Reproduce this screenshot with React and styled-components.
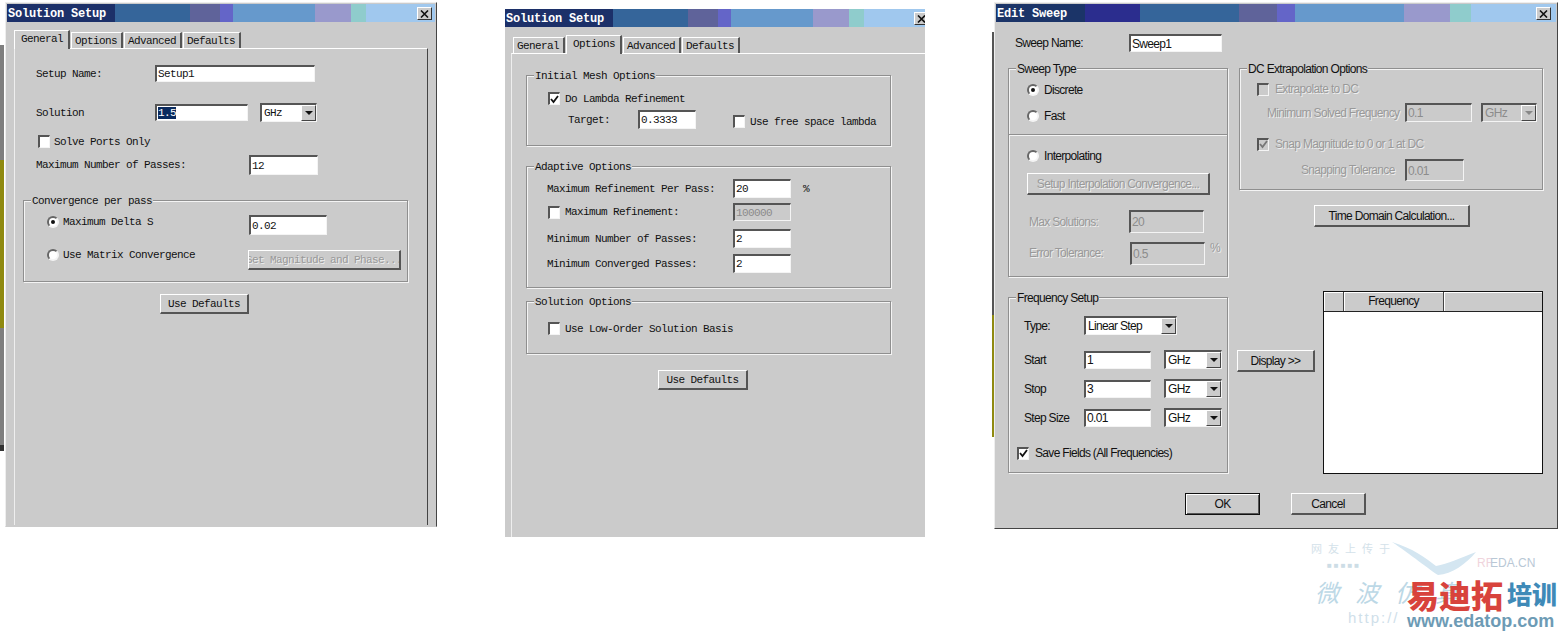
import React from "react";
import styled, { createGlobalStyle, css } from "styled-components";

const GRAY = "#cbcbcb";
const MONO = `"Liberation Mono", "DejaVu Sans Mono", monospace`;
const SANS = `"Liberation Sans", Arial, sans-serif`;

const Global = createGlobalStyle`
  html, body { margin: 0; padding: 0; background: #fff; overflow: hidden; }
  * { box-sizing: border-box; }
`;

const Page = styled.div`
  position: relative;
  display: flex;
  align-items: flex-start;
  width: 1560px;
  height: 632px;
  overflow: hidden;
  background: #fff;
`;

// leftovers of the app window behind the dialogs
const Strip = styled.div`
  display: flex;
  flex-direction: column;
  flex: none;
  width: ${(p) => p.$w}px;
  margin-top: ${(p) => p.$top}px;
  margin-right: ${(p) => p.$after}px;
`;
const StripPart = styled.div`
  height: ${(p) => p.$h}px;
  background: ${(p) => p.$c};
`;

const Dialog = styled.div`
  position: relative;
  flex: none;
  display: flex;
  flex-direction: column;
  width: ${(p) => p.$w}px;
  height: ${(p) => p.$h}px;
  margin-top: ${(p) => p.$top}px;
  margin-right: ${(p) => p.$after || 0}px;
  background: ${GRAY};
  color: #111;
  font-family: ${(p) => (p.$sans ? SANS : MONO)};
  font-size: ${(p) => (p.$sans ? 12 : 11)}px;
  letter-spacing: ${(p) => (p.$sans ? "-0.68px" : "-0.6px")};
  ${(p) =>
    p.$plain
      ? ""
      : css`
          padding: 1px;
          border: 1px solid;
          border-color: #eee #444 ${p.$closed ? "#444" : "transparent"} #eee;
        `}
`;

const TitleBar = styled.div`
  position: relative;
  flex: none;
  display: flex;
  height: 18px;
  overflow: hidden;
`;
const Band = styled.div`
  flex: ${(p) => (p.$w ? `0 0 ${p.$w}px` : "1")};
  background: ${(p) => p.$c};
`;
const TitleText = styled.div`
  position: absolute;
  left: 1px;
  top: 1px;
  line-height: 18px;
  color: #fff;
  font-family: ${MONO};
  font-size: 12px;
  font-weight: 700;
  letter-spacing: -0.2px;
`;
const CloseBtn = styled.div`
  position: absolute;
  top: 3px;
  right: ${(p) => p.$right}px;
  display: flex;
  align-items: center;
  justify-content: center;
  width: 15px;
  height: 13px;
  background: ${GRAY};
  border: 1px solid;
  border-color: #fff #333 #333 #fff;
`;

const Tabs = styled.div`
  flex: none;
  display: flex;
  align-items: flex-end;
  height: 18px;
  margin-top: 8px;
  margin-left: ${(p) => p.$left}px;
`;
const Tab = styled.div`
  position: relative;
  height: ${(p) => (p.$active ? 19 : 16)}px;
  margin-bottom: ${(p) => (p.$active ? -1 : 0)}px;
  margin-right: 1px;
  padding: ${(p) => (p.$active ? "2px 5px 0 6px" : "2px 4px 0 3px")};
  line-height: 13px;
  background: ${GRAY};
  border-top: 1px solid #fff;
  border-left: 1px solid #fff;
  border-right: 2px solid #555;
`;
const TabPanel = styled.div`
  flex: 1;
  margin-left: ${(p) => p.$left}px;
  margin-right: ${(p) => p.$right}px;
  border-top: 1px solid #fff;
  border-left: 1px solid #eee;
  border-right: ${(p) => (p.$right ? "1px solid #444" : "0")};
`;

const Row = styled.div`
  display: flex;
  align-items: center;
  flex: none;
  width: ${(p) => (p.$w ? `${p.$w}px` : "auto")};
  margin-top: ${(p) => p.$top || 0}px;
  margin-left: ${(p) => p.$left || 0}px;
  margin-bottom: ${(p) => p.$bottom || 0}px;
  gap: ${(p) => p.$gap || 0}px;
`;
const Label = styled.span`
  flex: none;
  width: ${(p) => (p.$w ? `${p.$w}px` : "auto")};
  white-space: nowrap;
  ${(p) =>
    p.$off &&
    css`
      color: #999;
      text-shadow: 1px 1px 0 #eee;
    `}
`;

const sunken = css`
  border-style: solid;
  border-width: 2px 1px 1px 2px;
  border-color: #555 #f4f4f4 #f4f4f4 #555;
`;
const Field = styled.div`
  flex: none;
  display: flex;
  align-items: center;
  width: ${(p) => p.$w}px;
  height: ${(p) => p.$h}px;
  padding-left: 1px;
  background: ${(p) => (p.$off ? GRAY : "#fff")};
  color: ${(p) => (p.$off ? "#8c8c8c" : "#111")};
  white-space: nowrap;
  overflow: hidden;
  ${sunken}
`;
const Selected = styled.span`
  background: #0a2a5e;
  color: #fff;
`;
const SelectBox = styled(Field)`
  justify-content: space-between;
  padding: 0 0 0 2px;
  margin-left: ${(p) => p.$gap || 0}px;
`;
const Arrow = styled.div`
  flex: none;
  display: flex;
  align-items: center;
  justify-content: center;
  width: 15px;
  height: 100%;
  background: ${GRAY};
  border: 1px solid;
  border-color: #fff #444 #444 #fff;
`;

const Button = styled.div`
  flex: none;
  display: flex;
  align-items: center;
  justify-content: center;
  width: ${(p) => p.$w}px;
  height: ${(p) => p.$h}px;
  margin-top: ${(p) => p.$top || 0}px;
  margin-left: ${(p) => p.$left || 0}px;
  white-space: nowrap;
  overflow: hidden;
  background: ${GRAY};
  color: ${(p) => (p.$off ? "#999" : "#111")};
  text-shadow: ${(p) => (p.$off ? "1px 1px 0 #eee" : "none")};
  border-style: solid;
  border-width: 1px 2px 2px 1px;
  border-color: #fff #555 #555 #fff;
  ${(p) =>
    p.$default &&
    css`
      border: 1px solid #111;
      box-shadow: inset 1px 1px 0 #fff, inset -1px -1px 0 #555;
    `}
`;

const Box = styled.div`
  flex: none;
  display: flex;
  align-items: center;
  justify-content: center;
  width: 12px;
  height: 13px;
  background: ${(p) => (p.$off ? GRAY : "#fff")};
  ${sunken}
`;
const RadioDot = styled.div`
  flex: none;
  display: flex;
  align-items: center;
  justify-content: center;
  width: 12px;
  height: 12px;
  border-radius: 50%;
  background: #fff;
  border: 2px solid;
  border-color: #666 #f4f4f4 #f4f4f4 #666;
  &::after {
    content: "";
    width: 4px;
    height: 4px;
    border-radius: 50%;
    background: ${(p) => (p.$on ? "#111" : "transparent")};
  }
`;

const Group = styled.div`
  position: relative;
  flex: none;
  width: ${(p) => p.$w}px;
  height: ${(p) => p.$h}px;
  margin-top: ${(p) => p.$top || 0}px;
  margin-left: ${(p) => p.$left || 0}px;
  border: 1px solid #8f8f8f;
  box-shadow: 1px 1px 0 #f4f4f4, inset 1px 1px 0 #f4f4f4;
`;
const Legend = styled.span`
  position: absolute;
  top: -6px;
  left: 7px;
  padding: 0 1px;
  line-height: 13px;
  background: ${GRAY};
  white-space: nowrap;
`;
const Section = styled.div`
  height: ${(p) => p.$h}px;
  padding-top: 1px;
  border-bottom: 1px solid #8f8f8f;
  box-shadow: 0 1px 0 #f4f4f4;
  overflow: hidden;
`;

const Body = styled.div`
  flex: 1;
  padding-left: 12px;
`;
const Columns = styled.div`
  display: grid;
  grid-template-columns: 220px 306px;
  column-gap: 9px;
  row-gap: 14px;
  margin-top: ${(p) => p.$top}px;
`;
const SideRow = styled.div`
  display: flex;
  align-items: flex-start;
`;
const Stack = styled.div`
  display: flex;
  flex-direction: column;
  align-items: flex-start;
`;

const FreqTable = styled.div`
  flex: none;
  display: flex;
  flex-direction: column;
  width: 220px;
  height: 183px;
  margin-left: 8px;
  background: #fff;
  border: 1px solid #111;
`;
const FreqHead = styled.div`
  display: grid;
  grid-template-columns: 20px 100px 1fr;
  height: 20px;
  background: ${GRAY};
  border-bottom: 1px solid #222;
`;
const HeadCell = styled.div`
  display: flex;
  align-items: center;
  justify-content: center;
  padding-bottom: 2px;
  border-right: 1px solid #444;
  box-shadow: inset 1px 1px 0 #fff;
  &:last-child { border-right: 0; }
`;
const Footer = styled.div`
  display: flex;
  gap: 31px;
  margin-top: 19px;
  margin-left: 177px;
`;

// faint site stamp bottom right
const Stamp = styled.div`
  position: absolute;
  left: 1305px;
  top: 538px;
  width: 255px;
  height: 94px;
  overflow: hidden;
`;
const StampText = styled.span`
  position: absolute;
  left: ${(p) => p.$x}px;
  top: ${(p) => p.$y}px;
  line-height: 1;
  white-space: nowrap;
  color: ${(p) => p.$c};
  font-size: ${(p) => p.$s}px;
  font-weight: ${(p) => p.$b || 400};
  font-family: ${(p) => (p.$latin ? SANS : `"Noto Sans CJK SC", sans-serif`)};
  letter-spacing: ${(p) => p.$ls || 0}px;
  ${(p) => (p.$italic ? "font-style: italic;" : "")}
`;
const Bird = styled.svg`
  position: absolute;
  left: 85px;
  top: 4px;
`;

const bandsLeft = [
  [108, "#1c3069"],
  [75, "#35659a"],
  [30, "#5f639a"],
  [13, "#6465c8"],
  [82, "#6699cc"],
  [36, "#9999cc"],
  [15, "#8fcccc"],
];
const bandsSweep = [
  [89, "#1b3468"],
  [55, "#2b2d8e"],
  [99, "#35659a"],
  [38, "#5f639a"],
  [18, "#6465c8"],
  [109, "#6699cc"],
  [46, "#9999cc"],
  [21, "#8fcccc"],
];

function Title({ text, bands, closeRight }) {
  return (
    <TitleBar>
      {bands.map(([w, c]) => (
        <Band key={c} $w={w} $c={c} />
      ))}
      <Band $c="#a0c8ee" />
      <TitleText>{text}</TitleText>
      <CloseBtn $right={closeRight}>
        <svg width="9" height="8" viewBox="0 0 9 8">
          <path d="M1 0.5 L8 7.5 M8 0.5 L1 7.5" stroke="#111" strokeWidth="1.6" fill="none" />
        </svg>
      </CloseBtn>
    </TitleBar>
  );
}

function Check({ on, off }) {
  return (
    <Box $off={off}>
      {on && (
        <svg width="9" height="9" viewBox="0 0 9 9">
          <path d="M1 4 L3.5 7 L8 1" stroke={off ? "#777" : "#111"} strokeWidth="1.8" fill="none" />
        </svg>
      )}
    </Box>
  );
}

function Select({ value, w, h, gap, off }) {
  return (
    <SelectBox $w={w} $h={h} $gap={gap} $off={off}>
      <span>{value}</span>
      <Arrow>
        <svg width="8" height="4" viewBox="0 0 8 4">
          <path d="M0 0 H8 L4 4 Z" fill={off ? "#888" : "#111"} />
        </svg>
      </Arrow>
    </SelectBox>
  );
}

function SetupTabs({ active, left }) {
  return (
    <Tabs $left={left}>
      {["General", "Options", "Advanced", "Defaults"].map((t) => (
        <Tab key={t} $active={t === active}>
          {t}
        </Tab>
      ))}
    </Tabs>
  );
}

function GeneralDialog() {
  return (
    <Dialog $w={432} $h={525} $top={2} $after={68}>
      <Title text="Solution Setup" bands={bandsLeft} closeRight={3} />
      <SetupTabs active="General" left={7} />
      <TabPanel $left={7} $right={7}>
        <Row $top={16} $left={21}>
          <Label $w={119}>Setup Name:</Label>
          <Field $w={160} $h={17}>Setup1</Field>
        </Row>
        <Row $top={21} $left={21}>
          <Label $w={119}>Solution</Label>
          <Field $w={93} $h={17}><Selected>1.5</Selected></Field>
          <Select value="GHz" w={57} h={19} gap={12} />
        </Row>
        <Row $top={13} $left={23} $gap={4}>
          <Check />
          <Label>Solve Ports Only</Label>
        </Row>
        <Row $top={7} $left={21}>
          <Label $w={213}>Maximum Number of Passes:</Label>
          <Field $w={69} $h={20}>12</Field>
        </Row>
        <Group $w={385} $h={82} $top={25} $left={8}>
          <Legend>Convergence per pass</Legend>
          <Row $top={14} $left={23}>
            <Row $w={202} $gap={4} $bottom={6}>
              <RadioDot $on />
              <Label>Maximum Delta S</Label>
            </Row>
            <Field $w={78} $h={20}>0.02</Field>
          </Row>
          <Row $top={14} $left={23}>
            <Row $w={201} $gap={4} $bottom={10}>
              <RadioDot />
              <Label>Use Matrix Convergence</Label>
            </Row>
            <Button $off $w={153} $h={20}>Set Magnitude and Phase...</Button>
          </Row>
        </Group>
        <Button $w={89} $h={20} $top={12} $left={145}>Use Defaults</Button>
      </TabPanel>
    </Dialog>
  );
}

function OptionsDialog() {
  return (
    <Dialog $plain $w={420} $h={528} $top={9} $after={67}>
      <Title text="Solution Setup" bands={bandsLeft} closeRight={-4} />
      <SetupTabs active="Options" left={8} />
      <TabPanel $left={6} $right={0}>
        <Group $w={365} $h={71} $top={21} $left={14}>
          <Legend>Initial Mesh Options</Legend>
          <Row $top={16} $left={21} $gap={5}>
            <Check on />
            <Label>Do Lambda Refinement</Label>
          </Row>
          <Row $top={5} $left={41}>
            <Label $w={70}>Target:</Label>
            <Field $w={58} $h={19}>0.3333</Field>
            <Row $top={4} $left={37} $gap={5}>
              <Check />
              <Label>Use free space lambda</Label>
            </Row>
          </Row>
        </Group>
        <Group $w={365} $h={122} $top={20} $left={14}>
          <Legend>Adaptive Options</Legend>
          <Row $top={12} $left={20}>
            <Label $w={186}>Maximum Refinement Per Pass:</Label>
            <Field $w={58} $h={19}>20</Field>
            <Row $left={12}>%</Row>
          </Row>
          <Row $top={5} $left={21} $gap={5}>
            <Check />
            <Label $w={163}>Maximum Refinement:</Label>
            <Field $off $w={58} $h={18}>100000</Field>
          </Row>
          <Row $top={8} $left={20}>
            <Label $w={186}>Minimum Number of Passes:</Label>
            <Field $w={58} $h={19}>2</Field>
          </Row>
          <Row $top={6} $left={20}>
            <Label $w={186}>Minimum Converged Passes:</Label>
            <Field $w={58} $h={19}>2</Field>
          </Row>
        </Group>
        <Group $w={365} $h={53} $top={13} $left={14}>
          <Legend>Solution Options</Legend>
          <Row $top={20} $left={21} $gap={5}>
            <Check />
            <Label>Use Low-Order Solution Basis</Label>
          </Row>
        </Group>
        <Button $w={90} $h={20} $top={16} $left={146}>Use Defaults</Button>
      </TabPanel>
    </Dialog>
  );
}

function SweepDialog() {
  return (
    <Dialog $sans $closed $w={564} $h={527} $top={2}>
      <Title text="Edit Sweep" bands={bandsSweep} closeRight={5} />
      <Body>
        <Row $top={12} $left={7}>
          <Label $w={114}>Sweep Name:</Label>
          <Field $w={93} $h={18}>Sweep1</Field>
        </Row>
        <Columns $top={16}>
          <Group $w={220} $h={209}>
            <Legend>Sweep Type</Legend>
            <Section $h={66}>
              <Row $top={13} $left={18} $gap={5}>
                <RadioDot $on />
                <Label>Discrete</Label>
              </Row>
              <Row $top={12} $left={18} $gap={5}>
                <RadioDot />
                <Label>Fast</Label>
              </Row>
            </Section>
            <Row $top={14} $left={18} $gap={5}>
              <RadioDot />
              <Label>Interpolating</Label>
            </Row>
            <Button $off $w={183} $h={22} $top={10} $left={18}>Setup Interpolation Convergence...</Button>
            <Row $top={15} $left={20}>
              <Label $off $w={100}>Max Solutions:</Label>
              <Field $off $w={75} $h={23}>20</Field>
            </Row>
            <Row $top={8} $left={20}>
              <Label $off $w={101}>Error Tolerance:</Label>
              <Field $off $w={75} $h={23}>0.5</Field>
              <Row $left={5} $bottom={10}><Label $off>%</Label></Row>
            </Row>
          </Group>
          <Stack>
            <Group $w={304} $h={122} $left={2}>
              <Legend>DC Extrapolation Options</Legend>
              <Row $top={13} $left={17} $gap={6}>
                <Check off />
                <Label $off>Extrapolate to DC</Label>
              </Row>
              <Row $top={7} $left={27}>
                <Label $off $w={138}>Minimum Solved Frequency</Label>
                <Field $off $w={67} $h={19}>0.1</Field>
                <Select off value="GHz" w={56} h={19} gap={9} />
              </Row>
              <Row $top={15} $left={17} $gap={6}>
                <Check on off />
                <Label $off>Snap Magnitude to 0 or 1 at DC</Label>
              </Row>
              <Row $top={8} $left={61}>
                <Label $off $w={104}>Snapping Tolerance</Label>
                <Field $off $w={59} $h={22}>0.01</Field>
              </Row>
            </Group>
            <Button $w={156} $h={22} $top={15} $left={77}>Time Domain Calculation...</Button>
          </Stack>
          <Group $w={220} $h={176} $top={6}>
            <Legend>Frequency Setup</Legend>
            <Row $top={18} $left={15}>
              <Label $w={60}>Type:</Label>
              <Select value="Linear Step" w={93} h={19} />
            </Row>
            <Row $top={15} $left={15}>
              <Label $w={60}>Start</Label>
              <Field $w={67} $h={18}>1</Field>
              <Select value="GHz" w={58} h={19} gap={13} />
            </Row>
            <Row $top={10} $left={15}>
              <Label $w={60}>Stop</Label>
              <Field $w={67} $h={18}>3</Field>
              <Select value="GHz" w={58} h={19} gap={13} />
            </Row>
            <Row $top={10} $left={15}>
              <Label $w={60}>Step Size</Label>
              <Field $w={67} $h={18}>0.01</Field>
              <Select value="GHz" w={58} h={19} gap={13} />
            </Row>
            <Row $top={19} $left={8} $gap={6}>
              <Check on />
              <Label>Save Fields (All Frequencies)</Label>
            </Row>
          </Group>
          <SideRow>
            <Button $w={78} $h={22} $top={59}>Display &gt;&gt;</Button>
            <FreqTable>
              <FreqHead>
                <HeadCell />
                <HeadCell>Frequency</HeadCell>
                <HeadCell />
              </FreqHead>
            </FreqTable>
          </SideRow>
        </Columns>
        <Footer>
          <Button $default $w={75} $h={22}>OK</Button>
          <Button $w={75} $h={22}>Cancel</Button>
        </Footer>
      </Body>
    </Dialog>
  );
}

export default function App() {
  return (
    <Page>
      <Global />
      <Strip $w={4} $top={45} $after={1}>
        <StripPart $h={115} $c="#7f7f7f" />
        <StripPart $h={168} $c="#8f8a10" />
        <StripPart $h={117} $c="#7f7f7f" />
        <StripPart $h={6} $c="#333" />
      </Strip>
      <GeneralDialog />
      <OptionsDialog />
      <Strip $w={2} $top={32} $after={0}>
        <StripPart $h={283} $c="#555" />
        <StripPart $h={122} $c="#8f8a10" />
      </Strip>
      <SweepDialog />
      <Stamp>
        <StampText $x={6} $y={5} $s={11} $ls={6} $c="#d4e2ea">网友上传于</StampText>
        <StampText $latin $x={22} $y={24} $s={8} $ls={2} $c="#cddde6">■■■■■</StampText>
        <Bird width="90" height="36" viewBox="0 0 90 36">
          <path d="M2 0 C22 6 36 16 46 24 C58 22 70 16 86 10 C76 22 62 32 48 33 C40 28 20 12 2 0 Z" fill="#d4e6f1" />
        </Bird>
        <StampText $latin $x={172} $y={19} $s={12} $c="#f0d4dc">RF</StampText>
        <StampText $latin $x={185} $y={19} $s={12} $c="#b9c8d6">EDA.CN</StampText>
        <StampText $x={10} $y={42} $s={24} $ls={16} $italic $c="#bcd8e6">微波仿真</StampText>
        <StampText $latin $x={43} $y={72} $s={15} $ls={2} $c="#cfe0ea">http://</StampText>
        <StampText $x={102} $y={40} $s={32} $b={900} $c="#d8433c">易迪拓</StampText>
        <StampText $x={202} $y={43} $s={25} $b={900} $c="#3f8ab8">培训</StampText>
        <StampText $latin $x={102} $y={74} $s={18} $b={700} $c="#6d9bb5">www.edatop.com</StampText>
      </Stamp>
    </Page>
  );
}
